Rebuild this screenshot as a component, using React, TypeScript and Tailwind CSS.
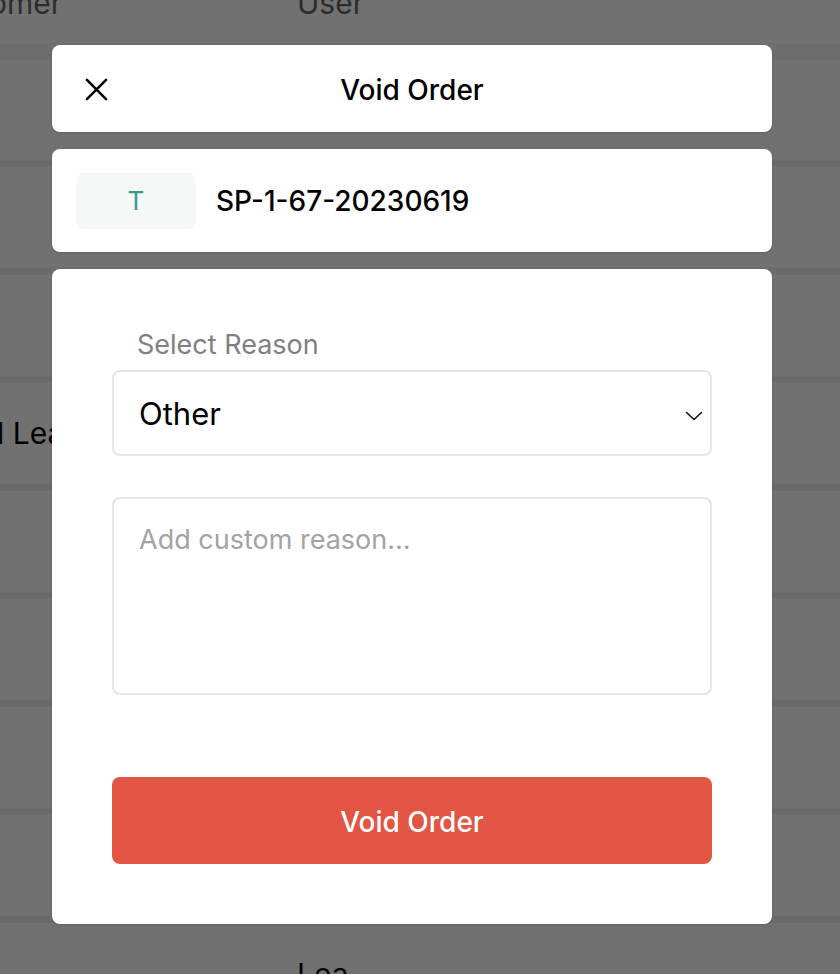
import React from "react";

const font = { fontFamily: "Inter, 'Noto Sans', sans-serif" };

function BgRow({ children }: { children?: React.ReactNode }) {
  return (
    <div className="flex h-[108px] items-center border-b-[7px] border-[#f0f0f0] bg-white text-[30px] text-black">
      {children}
    </div>
  );
}

export default function App() {
  return (
    <div className="relative h-[974px] w-[840px] overflow-hidden bg-white" style={font}>
      {/* background table */}
      <div className="flex flex-col">
        <div className="relative h-[44px] text-[30px] text-[#666666]">
          <span className="absolute left-[-76px] top-[-12px] leading-none">Customer</span>
          <span className="absolute left-[297px] top-[-12px] leading-none">User</span>
        </div>
        <div className="h-[16px] bg-[#f3f3f3]" />
        <div className="h-[107px] border-b-[7px] border-[#f0f0f0] bg-white" />
        <BgRow />
        <BgRow />
        <BgRow>
          <span className="ml-[-3px]">l Leaf</span>
        </BgRow>
        <BgRow />
        <BgRow />
        <BgRow />
        <BgRow />
        <div className="relative h-[60px] bg-white">
          <span className="absolute left-[297px] top-[36px] text-[30px] leading-none text-black">Lea</span>
        </div>
      </div>

      {/* overlay */}
      <div className="absolute inset-0 bg-black/[0.555]" />

      {/* modal */}
      <div className="absolute left-[52px] top-[45px] flex w-[720px] flex-col gap-[17px]">
        <div className="relative flex h-[87px] items-center justify-center rounded-[8px] bg-white pt-[3px] shadow">
          <button className="absolute left-[33px] top-[33px] text-black">
            <svg width="23" height="23" viewBox="0 0 24 24" fill="none" stroke="currentColor" strokeWidth="2.6" strokeLinecap="round">
              <path d="M2 2 L22 22 M22 2 L2 22" />
            </svg>
          </button>
          <span className="text-[28px] font-medium text-black">Void Order</span>
        </div>

        <div className="flex h-[103px] items-center gap-[20px] rounded-[8px] bg-white px-[24px] shadow">
          <div className="flex h-[56px] w-[120px] items-center justify-center rounded-[8px] bg-[#f4f9f7] text-[26px] text-[#3a9985]">
            T
          </div>
          <span className="text-[28px] font-medium text-black">SP-1-67-20230619</span>
        </div>

        <div className="flex h-[655px] flex-col rounded-[8px] bg-white px-[60px] pt-[58px] shadow">
          <label className="ml-[25px] text-[27px] leading-[36px] text-[#808080]">Select Reason</label>
          <div className="mt-[7px] flex h-[86px] items-center justify-between rounded-[8px] border-2 border-[#e6e6e6] pl-[25px] pr-[7px]">
            <span className="pt-[3px] text-[31px] text-black">Other</span>
            <svg width="18" height="10" viewBox="0 0 18 10" fill="none" stroke="#111" strokeWidth="1.6" strokeLinecap="round" strokeLinejoin="round" className="mt-[5px]">
              <path d="M1.5 1.5 L9 8.5 L16.5 1.5" />
            </svg>
          </div>
          <div className="mt-[41px] h-[198px] rounded-[8px] border-2 border-[#e6e6e6] px-[25px] pt-[21px]">
            <span className="text-[27px] leading-[40px] text-[#a3a3a3]">Add custom reason...</span>
          </div>
          <button className="mt-[82px] flex h-[87px] items-center justify-center rounded-[8px] bg-[#e25543] pt-[2px] text-[28px] font-medium text-white">
            Void Order
          </button>
        </div>
      </div>
    </div>
  );
}
